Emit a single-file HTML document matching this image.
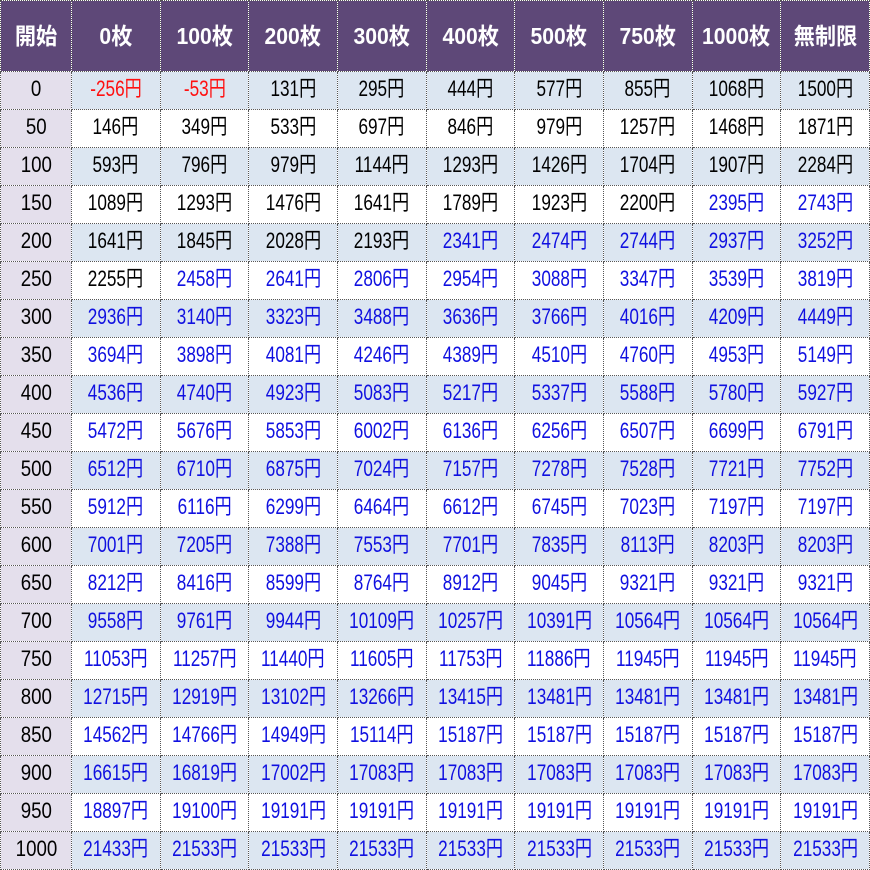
<!DOCTYPE html>
<html><head><meta charset="utf-8"><style>
body{margin:0;background:#fff;}
table{border-collapse:collapse;table-layout:fixed;width:870px;height:870px;font-family:"Liberation Sans","Noto Sans CJK JP",sans-serif;}
td,th{border:1px dotted #555;text-align:center;padding:0;font-size:22px;white-space:nowrap;overflow:hidden;line-height:24px;}
th{background:#5e4878;color:#fff;font-weight:bold;height:70px;font-size:23px;}
td{height:37px;color:#000;}
tr:nth-child(even) td{background:#dce6f1;}
tr:nth-child(odd) td{background:#fff;}
td:first-child{background:#e4dfec !important;color:#000 !important;}
.b{color:#1010e0;}
.r{color:#ff1010;}
span.s{display:inline-block;transform:scaleX(.92);}
td span.s{transform:scaleX(.78) translateY(-2px);}
td:first-child span.s{transform:scaleX(.85) translateY(-2px);}
</style></head><body>
<table>
<colgroup><col style="width:71px"><col span="9"></colgroup>
<tr><th>開始</th><th>0枚</th><th>100枚</th><th>200枚</th><th>300枚</th><th>400枚</th><th>500枚</th><th>750枚</th><th>1000枚</th><th>無制限</th></tr>
<tr><td>0</td><td class="r">-256円</td><td class="r">-53円</td><td>131円</td><td>295円</td><td>444円</td><td>577円</td><td>855円</td><td>1068円</td><td>1500円</td></tr>
<tr><td>50</td><td>146円</td><td>349円</td><td>533円</td><td>697円</td><td>846円</td><td>979円</td><td>1257円</td><td>1468円</td><td>1871円</td></tr>
<tr><td>100</td><td>593円</td><td>796円</td><td>979円</td><td>1144円</td><td>1293円</td><td>1426円</td><td>1704円</td><td>1907円</td><td>2284円</td></tr>
<tr><td>150</td><td>1089円</td><td>1293円</td><td>1476円</td><td>1641円</td><td>1789円</td><td>1923円</td><td>2200円</td><td class="b">2395円</td><td class="b">2743円</td></tr>
<tr><td>200</td><td>1641円</td><td>1845円</td><td>2028円</td><td>2193円</td><td class="b">2341円</td><td class="b">2474円</td><td class="b">2744円</td><td class="b">2937円</td><td class="b">3252円</td></tr>
<tr><td>250</td><td>2255円</td><td class="b">2458円</td><td class="b">2641円</td><td class="b">2806円</td><td class="b">2954円</td><td class="b">3088円</td><td class="b">3347円</td><td class="b">3539円</td><td class="b">3819円</td></tr>
<tr><td>300</td><td class="b">2936円</td><td class="b">3140円</td><td class="b">3323円</td><td class="b">3488円</td><td class="b">3636円</td><td class="b">3766円</td><td class="b">4016円</td><td class="b">4209円</td><td class="b">4449円</td></tr>
<tr><td>350</td><td class="b">3694円</td><td class="b">3898円</td><td class="b">4081円</td><td class="b">4246円</td><td class="b">4389円</td><td class="b">4510円</td><td class="b">4760円</td><td class="b">4953円</td><td class="b">5149円</td></tr>
<tr><td>400</td><td class="b">4536円</td><td class="b">4740円</td><td class="b">4923円</td><td class="b">5083円</td><td class="b">5217円</td><td class="b">5337円</td><td class="b">5588円</td><td class="b">5780円</td><td class="b">5927円</td></tr>
<tr><td>450</td><td class="b">5472円</td><td class="b">5676円</td><td class="b">5853円</td><td class="b">6002円</td><td class="b">6136円</td><td class="b">6256円</td><td class="b">6507円</td><td class="b">6699円</td><td class="b">6791円</td></tr>
<tr><td>500</td><td class="b">6512円</td><td class="b">6710円</td><td class="b">6875円</td><td class="b">7024円</td><td class="b">7157円</td><td class="b">7278円</td><td class="b">7528円</td><td class="b">7721円</td><td class="b">7752円</td></tr>
<tr><td>550</td><td class="b">5912円</td><td class="b">6116円</td><td class="b">6299円</td><td class="b">6464円</td><td class="b">6612円</td><td class="b">6745円</td><td class="b">7023円</td><td class="b">7197円</td><td class="b">7197円</td></tr>
<tr><td>600</td><td class="b">7001円</td><td class="b">7205円</td><td class="b">7388円</td><td class="b">7553円</td><td class="b">7701円</td><td class="b">7835円</td><td class="b">8113円</td><td class="b">8203円</td><td class="b">8203円</td></tr>
<tr><td>650</td><td class="b">8212円</td><td class="b">8416円</td><td class="b">8599円</td><td class="b">8764円</td><td class="b">8912円</td><td class="b">9045円</td><td class="b">9321円</td><td class="b">9321円</td><td class="b">9321円</td></tr>
<tr><td>700</td><td class="b">9558円</td><td class="b">9761円</td><td class="b">9944円</td><td class="b">10109円</td><td class="b">10257円</td><td class="b">10391円</td><td class="b">10564円</td><td class="b">10564円</td><td class="b">10564円</td></tr>
<tr><td>750</td><td class="b">11053円</td><td class="b">11257円</td><td class="b">11440円</td><td class="b">11605円</td><td class="b">11753円</td><td class="b">11886円</td><td class="b">11945円</td><td class="b">11945円</td><td class="b">11945円</td></tr>
<tr><td>800</td><td class="b">12715円</td><td class="b">12919円</td><td class="b">13102円</td><td class="b">13266円</td><td class="b">13415円</td><td class="b">13481円</td><td class="b">13481円</td><td class="b">13481円</td><td class="b">13481円</td></tr>
<tr><td>850</td><td class="b">14562円</td><td class="b">14766円</td><td class="b">14949円</td><td class="b">15114円</td><td class="b">15187円</td><td class="b">15187円</td><td class="b">15187円</td><td class="b">15187円</td><td class="b">15187円</td></tr>
<tr><td>900</td><td class="b">16615円</td><td class="b">16819円</td><td class="b">17002円</td><td class="b">17083円</td><td class="b">17083円</td><td class="b">17083円</td><td class="b">17083円</td><td class="b">17083円</td><td class="b">17083円</td></tr>
<tr><td>950</td><td class="b">18897円</td><td class="b">19100円</td><td class="b">19191円</td><td class="b">19191円</td><td class="b">19191円</td><td class="b">19191円</td><td class="b">19191円</td><td class="b">19191円</td><td class="b">19191円</td></tr>
<tr><td>1000</td><td class="b">21433円</td><td class="b">21533円</td><td class="b">21533円</td><td class="b">21533円</td><td class="b">21533円</td><td class="b">21533円</td><td class="b">21533円</td><td class="b">21533円</td><td class="b">21533円</td></tr>
</table>
<script>
document.querySelectorAll('td,th').forEach(function(c){c.innerHTML='<span class="s">'+c.innerHTML+'</span>';});
</script>
</body></html>
